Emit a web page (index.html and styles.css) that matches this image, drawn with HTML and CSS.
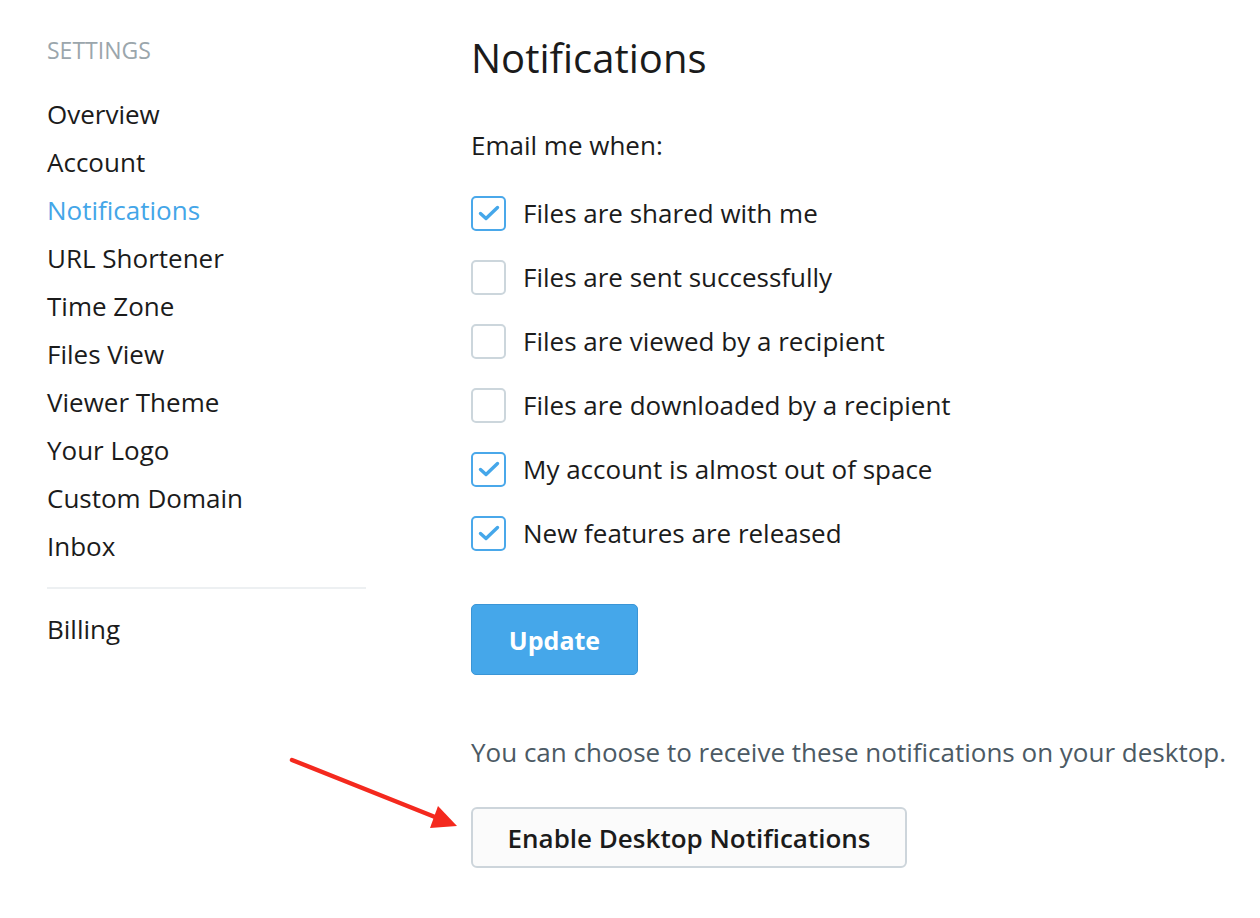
FILE: index.html
```html
<!DOCTYPE html>
<html>
<head>
<meta charset="utf-8">
<link rel="stylesheet" href="styles.css">
</head>
<body>
<div class="page">
  <aside class="sidebar">
    <div class="side-title">SETTINGS</div>
    <nav class="nav">
      <a class="nav-item">Overview</a>
      <a class="nav-item">Account</a>
      <a class="nav-item active">Notifications</a>
      <a class="nav-item">URL Shortener</a>
      <a class="nav-item">Time Zone</a>
      <a class="nav-item">Files View</a>
      <a class="nav-item">Viewer Theme</a>
      <a class="nav-item">Your Logo</a>
      <a class="nav-item">Custom Domain</a>
      <a class="nav-item">Inbox</a>
    </nav>
    <div class="divider"></div>
    <a class="nav-item">Billing</a>
  </aside>
  <main class="main">
    <h1 class="title">Notifications</h1>
    <p class="lead">Email me when:</p>
    <ul class="checks">
      <li class="check-row"><span class="box checked"><svg viewBox="0 0 22 16" width="22" height="16"><path d="M2.5 8.5 L8 13.5 L19.5 2.5" fill="none" stroke="#45a7ea" stroke-width="3.4" stroke-linecap="round" stroke-linejoin="round"/></svg></span>Files are shared with me</li>
      <li class="check-row"><span class="box"></span>Files are sent successfully</li>
      <li class="check-row"><span class="box"></span>Files are viewed by a recipient</li>
      <li class="check-row"><span class="box"></span>Files are downloaded by a recipient</li>
      <li class="check-row"><span class="box checked"><svg viewBox="0 0 22 16" width="22" height="16"><path d="M2.5 8.5 L8 13.5 L19.5 2.5" fill="none" stroke="#45a7ea" stroke-width="3.4" stroke-linecap="round" stroke-linejoin="round"/></svg></span>My account is almost out of space</li>
      <li class="check-row"><span class="box checked"><svg viewBox="0 0 22 16" width="22" height="16"><path d="M2.5 8.5 L8 13.5 L19.5 2.5" fill="none" stroke="#45a7ea" stroke-width="3.4" stroke-linecap="round" stroke-linejoin="round"/></svg></span>New features are released</li>
    </ul>
    <button class="btn-primary">Update</button>
    <p class="hint">You can choose to receive these notifications on your desktop.</p>
    <button class="btn-secondary">Enable Desktop Notifications</button>
  </main>
  <svg class="arrow" width="1260" height="918" viewBox="0 0 1260 918">
    <line x1="292" y1="760" x2="440" y2="819" stroke="#f4291e" stroke-width="4.5" stroke-linecap="round"/>
    <polygon points="457,826 430,828 438,806" fill="#f4291e"/>
  </svg>
</div>
</body>
</html>
```
FILE: styles.css
```css
* { box-sizing: border-box; }
html, body { margin: 0; padding: 0; background: #fff; }
body {
  font-family: "Open Sans", "Noto Sans", sans-serif;
  color: #1b1b1b;
}
.page {
  position: relative;
  width: 1260px;
  height: 918px;
  display: flex;
  padding: 34px 0 0 47px;
}
.sidebar {
  width: 319px;
  display: flex;
  flex-direction: column;
  padding-top: 4px;
}
.side-title {
  font-size: 23px;
  line-height: 24px;
  color: #9ba6ac;
  margin-bottom: 28px;
}
.nav { display: flex; flex-direction: column; }
.nav-item {
  font-size: 26px;
  line-height: 48px;
  color: #1b1b1b;
  cursor: pointer;
}
.nav-item.active { color: #44a6e8; }
.divider {
  height: 2px;
  background: #edf0f2;
  margin: 17px 0 16px;
}
.main {
  margin-left: 105px;
  display: flex;
  flex-direction: column;
  align-items: flex-start;
}
.title {
  font-size: 40px;
  font-weight: 400;
  line-height: 48px;
  margin: 0;
}
.lead {
  font-size: 26px;
  line-height: 48px;
  margin: 39px 0 12px;
}
.checks {
  list-style: none;
  margin: 0;
  padding: 0;
}
.check-row {
  display: flex;
  align-items: center;
  height: 64px;
  font-size: 26px;
}
.box {
  width: 35px;
  height: 35px;
  border: 2px solid #ccd6dc;
  border-radius: 5px;
  margin-right: 17px;
  display: flex;
  align-items: center;
  justify-content: center;
  flex-shrink: 0;
}
.box.checked { border-color: #4aa8ea; }
.btn-primary {
  margin-top: 39px;
  width: 167px;
  height: 71px;
  background: #45a7ea;
  border: 1px solid #3a95d6;
  border-radius: 5px;
  color: #fff;
  font-family: inherit;
  font-size: 25px;
  font-weight: 700;
  padding: 0;
}
.hint {
  font-size: 26px;
  line-height: 48px;
  color: #4c5a64;
  margin: 53px 0 31px;
}
.btn-secondary {
  width: 436px;
  height: 61px;
  background: #fbfbfb;
  border: 2px solid #cdd5db;
  border-radius: 6px;
  font-family: inherit;
  font-size: 26px;
  font-weight: 600;
  color: #1b1b1b;
  padding: 0;
}
.arrow {
  position: absolute;
  left: 0;
  top: 0;
  pointer-events: none;
}
```
